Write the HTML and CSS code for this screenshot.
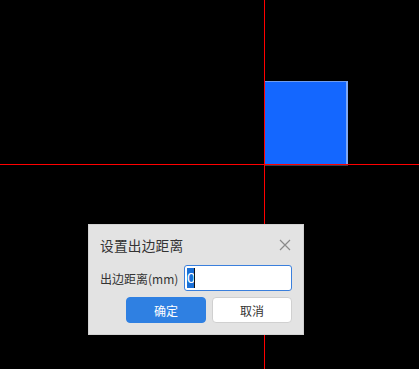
FILE: index.html
```html
<!DOCTYPE html>
<html>
<head>
<meta charset="utf-8">
<link rel="stylesheet" href="styles.css">
</head>
<body>
<div class="canvas">
  <div class="shape"></div>
  <div class="axis-v"></div>
  <div class="axis-h"></div>
  <div class="dialog">
    <div class="dialog-header">
      <span class="dialog-title">设置出边距离</span>
      <svg class="close" width="12" height="12" viewBox="0 0 12 12"><path d="M1 1L11 11M11 1L1 11" stroke="#8a8a8a" stroke-width="1.2" fill="none"/></svg>
    </div>
    <div class="form-row">
      <span class="label">出边距离(mm)</span>
      <div class="input"><span class="sel">0</span><span class="caret"></span></div>
    </div>
    <div class="actions">
      <button class="btn btn-primary">确定</button>
      <button class="btn btn-default">取消</button>
    </div>
  </div>
</div>
</body>
</html>
```
FILE: styles.css
```css
html, body {
  margin: 0;
  padding: 0;
  background: #000;
}
.canvas {
  position: relative;
  width: 419px;
  height: 369px;
  overflow: hidden;
  background: #000;
  font-family: "Noto Sans CJK SC", "Noto Sans", sans-serif;
}
.shape {
  position: absolute;
  left: 264px;
  top: 81px;
  width: 82px;
  height: 82px;
  background: #1467ff;
  border-top: 1px solid #6f9cf0;
  border-right: 2px solid #7ea8f5;
  box-shadow: 0 2px 0 #3a3f4a;
}
.axis-v {
  position: absolute;
  left: 264px;
  top: 0;
  width: 1px;
  height: 369px;
  background: #ff0000;
}
.axis-h {
  position: absolute;
  left: 0;
  top: 164px;
  width: 419px;
  height: 1px;
  background: #ff0000;
}
.dialog {
  position: absolute;
  left: 88px;
  top: 224px;
  width: 216px;
  height: 111px;
  box-sizing: border-box;
  background: #e3e3e3;
  border: 1px solid #d2d2d2;
  padding: 0 11px 11px 11px;
  display: flex;
  flex-direction: column;
}
.dialog-header {
  height: 40px;
  display: flex;
  align-items: center;
  justify-content: space-between;
}
.dialog-title {
  font-size: 13.7px;
  color: #333;
  letter-spacing: 0.2px;
}
.close {
  margin-right: 1px;
}
.form-row {
  height: 26px;
  display: flex;
  align-items: center;
}
.label {
  font-size: 12px;
  color: #333;
}
.input {
  margin-left: auto;
  width: 108px;
  height: 26px;
  box-sizing: border-box;
  border: 1px solid #3a7fdc;
  border-radius: 3px;
  background: #fff;
  display: flex;
  align-items: center;
  padding-left: 2px;
}
.sel {
  background: #1a6fd6;
  color: #fff;
  font-family: "Liberation Sans", Arial, sans-serif;
  font-size: 15px;
  line-height: 20px;
  width: 7px;
  text-align: center;
}
.caret {
  width: 1px;
  height: 20px;
  background: #111;
}
.actions {
  margin-top: 6px;
  display: flex;
  justify-content: flex-end;
  gap: 6px;
}
.btn {
  width: 80px;
  height: 26px;
  box-sizing: border-box;
  border-radius: 4px;
  font-family: "Noto Sans CJK SC", "Noto Sans", sans-serif;
  font-size: 12px;
  padding: 0;
  cursor: pointer;
}
.btn-primary {
  background: #2f80e2;
  border: 1px solid #2f80e2;
  color: #fff;
}
.btn-default {
  background: #fff;
  border: 1px solid #d0d0d0;
  color: #333;
}
```
